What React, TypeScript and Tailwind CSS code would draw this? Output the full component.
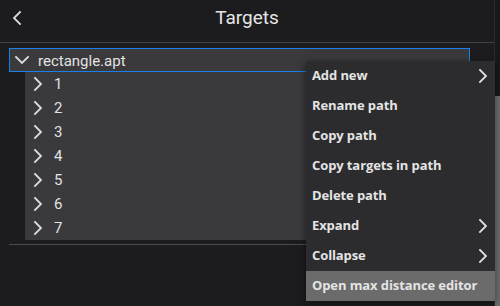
import React from "react";

const children = ["1", "2", "3", "4", "5", "6", "7"];

const menuItems = [
  { label: "Add new", sub: true },
  { label: "Rename path" },
  { label: "Copy path" },
  { label: "Copy targets in path" },
  { label: "Delete path" },
  { label: "Expand", sub: true },
  { label: "Collapse", sub: true },
  { label: "Open max distance editor", active: true },
];

function Chevron({ dir, className }: { dir: "left" | "right" | "down"; className?: string }) {
  const d =
    dir === "left" ? "M9 2 L3 8 L9 14" : dir === "right" ? "M3 2 L9 8 L3 14" : "M2 4 L8 10 L14 4";
  const w = dir === "down" ? 16 : 12;
  const h = dir === "down" ? 14 : 16;
  return (
    <svg width={w} height={h} viewBox={`0 0 ${w} ${h}`} className={className}>
      <path d={d} fill="none" stroke="currentColor" strokeWidth="1.8" strokeLinecap="square" />
    </svg>
  );
}

export default function App() {
  return (
    <div className="relative flex h-[306px] w-[500px] overflow-hidden bg-[#1c1c1e] font-['Roboto',sans-serif] text-[#e2e2e2]">
      <div className="flex w-[494px] flex-col">
        <header className="relative flex h-[43px] items-center justify-center border-b border-[#414143]">
          <button className="absolute left-0 top-0 flex h-[36px] w-[30px] items-center justify-center text-[#dcdcdc]">
            <Chevron dir="left" className="ml-[4px]" />
          </button>
          <h1 className="mt-[-5px] text-[19px] font-normal text-[#e6e6e6]">Targets</h1>
        </header>

        <div className="px-[9px] pt-[5px]">
          <div className="w-[461px]">
            <div className="flex h-[24px] items-center gap-[8px] border border-[#1a7fe8] bg-[#3a3a3c] pl-[4px]">
              <Chevron dir="down" className="text-[#dcdcdc]" />
              <span className="mt-[2px] text-[15px] leading-none">rectangle.apt</span>
            </div>
            <div className="ml-[16px] bg-[#3a3a3c]">
              {children.map((c) => (
                <div key={c} className="flex h-[24px] items-center gap-[10px] pl-[7px]">
                  <Chevron dir="right" className="text-[#dcdcdc]" />
                  <span className="mt-[1px] text-[15px] leading-none">{c}</span>
                </div>
              ))}
            </div>
          </div>
          <div className="mt-[4px] h-px w-full bg-[#4a4a4c]" />
        </div>
      </div>

      <div className="w-[6px] border-l border-[#2a2a2c] bg-[#19191a]">
        <div className="mt-[96px] h-[210px] w-full bg-[#6e6e6e]" />
      </div>

      <div className="absolute left-[306px] top-[61px] w-[189px] bg-[#2c2c2e] font-['Open_Sans',sans-serif] shadow-[0_2px_8px_rgba(0,0,0,0.5)]">
        {menuItems.map((m) => (
          <div
            key={m.label}
            className={`flex h-[30px] items-center justify-between pl-[6px] pr-[6px] text-[13px] font-bold tracking-[-0.1px] text-[#e4e4e4] ${
              m.active ? "bg-[#6b6b6b]" : ""
            }`}
          >
            <span>{m.label}</span>
            {m.sub && <Chevron dir="right" className="text-[#e0e0e0]" />}
          </div>
        ))}
      </div>
    </div>
  );
}
